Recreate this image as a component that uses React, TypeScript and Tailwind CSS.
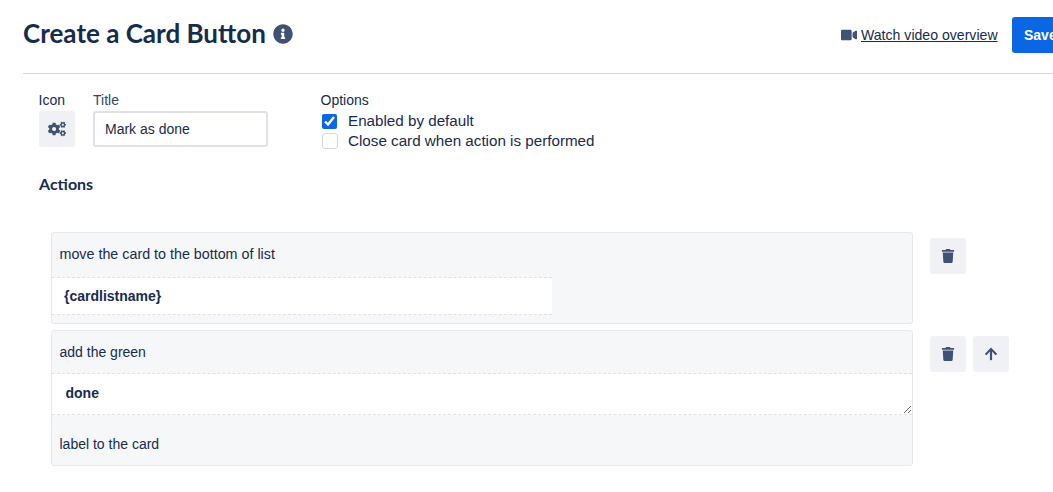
import React from "react";
import { FaCogs, FaInfoCircle, FaVideo, FaTrash, FaArrowUp } from "react-icons/fa";

const IconButton = ({ children }: { children: React.ReactNode }) => (
  <button className="flex size-[36px] items-center justify-center rounded-[3px] bg-[#f0f1f4] text-[#3f5273]">
    {children}
  </button>
);

const App = () => {
  return (
    <div className="h-[492px] w-[1053px] overflow-hidden bg-white pl-[23px] font-['Liberation_Sans',sans-serif] text-[14px] text-[#172b4d]">
      {/* Header */}
      <div className="flex h-[74px] w-[1100px] items-start border-b border-[#d3d4d6] pt-[17px]">
        <div className="flex h-[36px] w-[818px] items-center gap-[7px]">
          <h1 className="pb-[4px] font-['Lato',sans-serif] text-[26px] font-bold leading-[34px]">
            Create a Card Button
          </h1>
          <FaInfoCircle className="mb-[2px] size-[20px] text-[#3f5273]" />
        </div>
        <a className="flex h-[36px] w-[171px] items-center gap-[4px] text-[14.1px] underline">
          <FaVideo className="size-[16px] text-[#3f5273]" />
          <span className="pt-[1px]">Watch video overview</span>
        </a>
        <button className="h-[36px] w-[80px] rounded-[3px] bg-[#0b66e4] pl-[12px] text-left font-bold text-white">
          Save
        </button>
      </div>

      {/* Form row */}
      <div className="flex pl-[16px] pt-[18px]">
        <div className="w-[54px]">
          <div className="-ml-[0.5px] h-[19px] leading-[17px]">Icon</div>
          <IconButton>
            <FaCogs className="size-[18px]" />
          </IconButton>
        </div>
        <div className="w-[228px]">
          <div className="h-[19px] leading-[17px] text-[#344563]">Title</div>
          <input
            defaultValue="Mark as done"
            className="h-[36px] w-[175px] rounded-[3px] border-2 border-[#dfe1e6] px-[10px] outline-none"
          />
        </div>
        <div>
          <div className="-ml-[0.5px] h-[19px] leading-[17px]">Options</div>
          <label className="flex h-[20px] items-center gap-[11px] text-[15.2px]">
            <input type="checkbox" defaultChecked className="ml-[1px] size-[15px] accent-[#0b66e4]" />
            Enabled by default
          </label>
          <label className="flex h-[20px] items-center gap-[10px] text-[15.2px]">
            <input type="checkbox" className="ml-[1px] size-[16px] appearance-none rounded-[3px] border border-[#d5d8de] bg-white" />
            Close card when action is performed
          </label>
        </div>
      </div>

      <h2 className="pl-[16px] pt-[23px] font-['Lato',sans-serif] text-[16px] font-bold leading-[20px]">
        Actions
      </h2>

      {/* Action 1 */}
      <div className="mt-[38px] flex items-start pl-[28px]">
        <div className="h-[92px] w-[862px] rounded-[3px] border border-[#e8e9ec] bg-[#f6f7f9]">
          <div className="flex h-[44px] items-center pl-[7.5px] text-[14.3px]">
            move the card to the bottom of list
          </div>
          <div className="flex h-[38px] w-[500px] items-center border-y border-dashed border-[#dfe1e6] bg-white pl-[12px] font-bold">
            {"{cardlistname}"}
          </div>
        </div>
        <div className="ml-[17px] mt-[6px]">
          <IconButton>
            <FaTrash className="size-[14px]" />
          </IconButton>
        </div>
      </div>

      {/* Action 2 */}
      <div className="mt-[6px] flex items-start pl-[28px]">
        <div className="h-[136px] w-[862px] rounded-[3px] border border-[#e8e9ec] bg-[#f6f7f9]">
          <div className="flex h-[42px] items-center pl-[7.5px]">add the green</div>
          <textarea
            defaultValue="done"
            className="block h-[42px] w-full rounded-none border-y border-dashed border-[#dfe1e6] bg-white px-[13.5px] pt-[10px] font-bold leading-[18px] outline-none"
          />
          <div className="flex h-[50px] items-center pl-[7.5px] pt-[8px]">label to the card</div>
        </div>
        <div className="ml-[17px] mt-[6px] flex gap-[7px]">
          <IconButton>
            <FaTrash className="size-[14px]" />
          </IconButton>
          <IconButton>
            <FaArrowUp className="size-[14px]" />
          </IconButton>
        </div>
      </div>
    </div>
  );
};

export default App;
